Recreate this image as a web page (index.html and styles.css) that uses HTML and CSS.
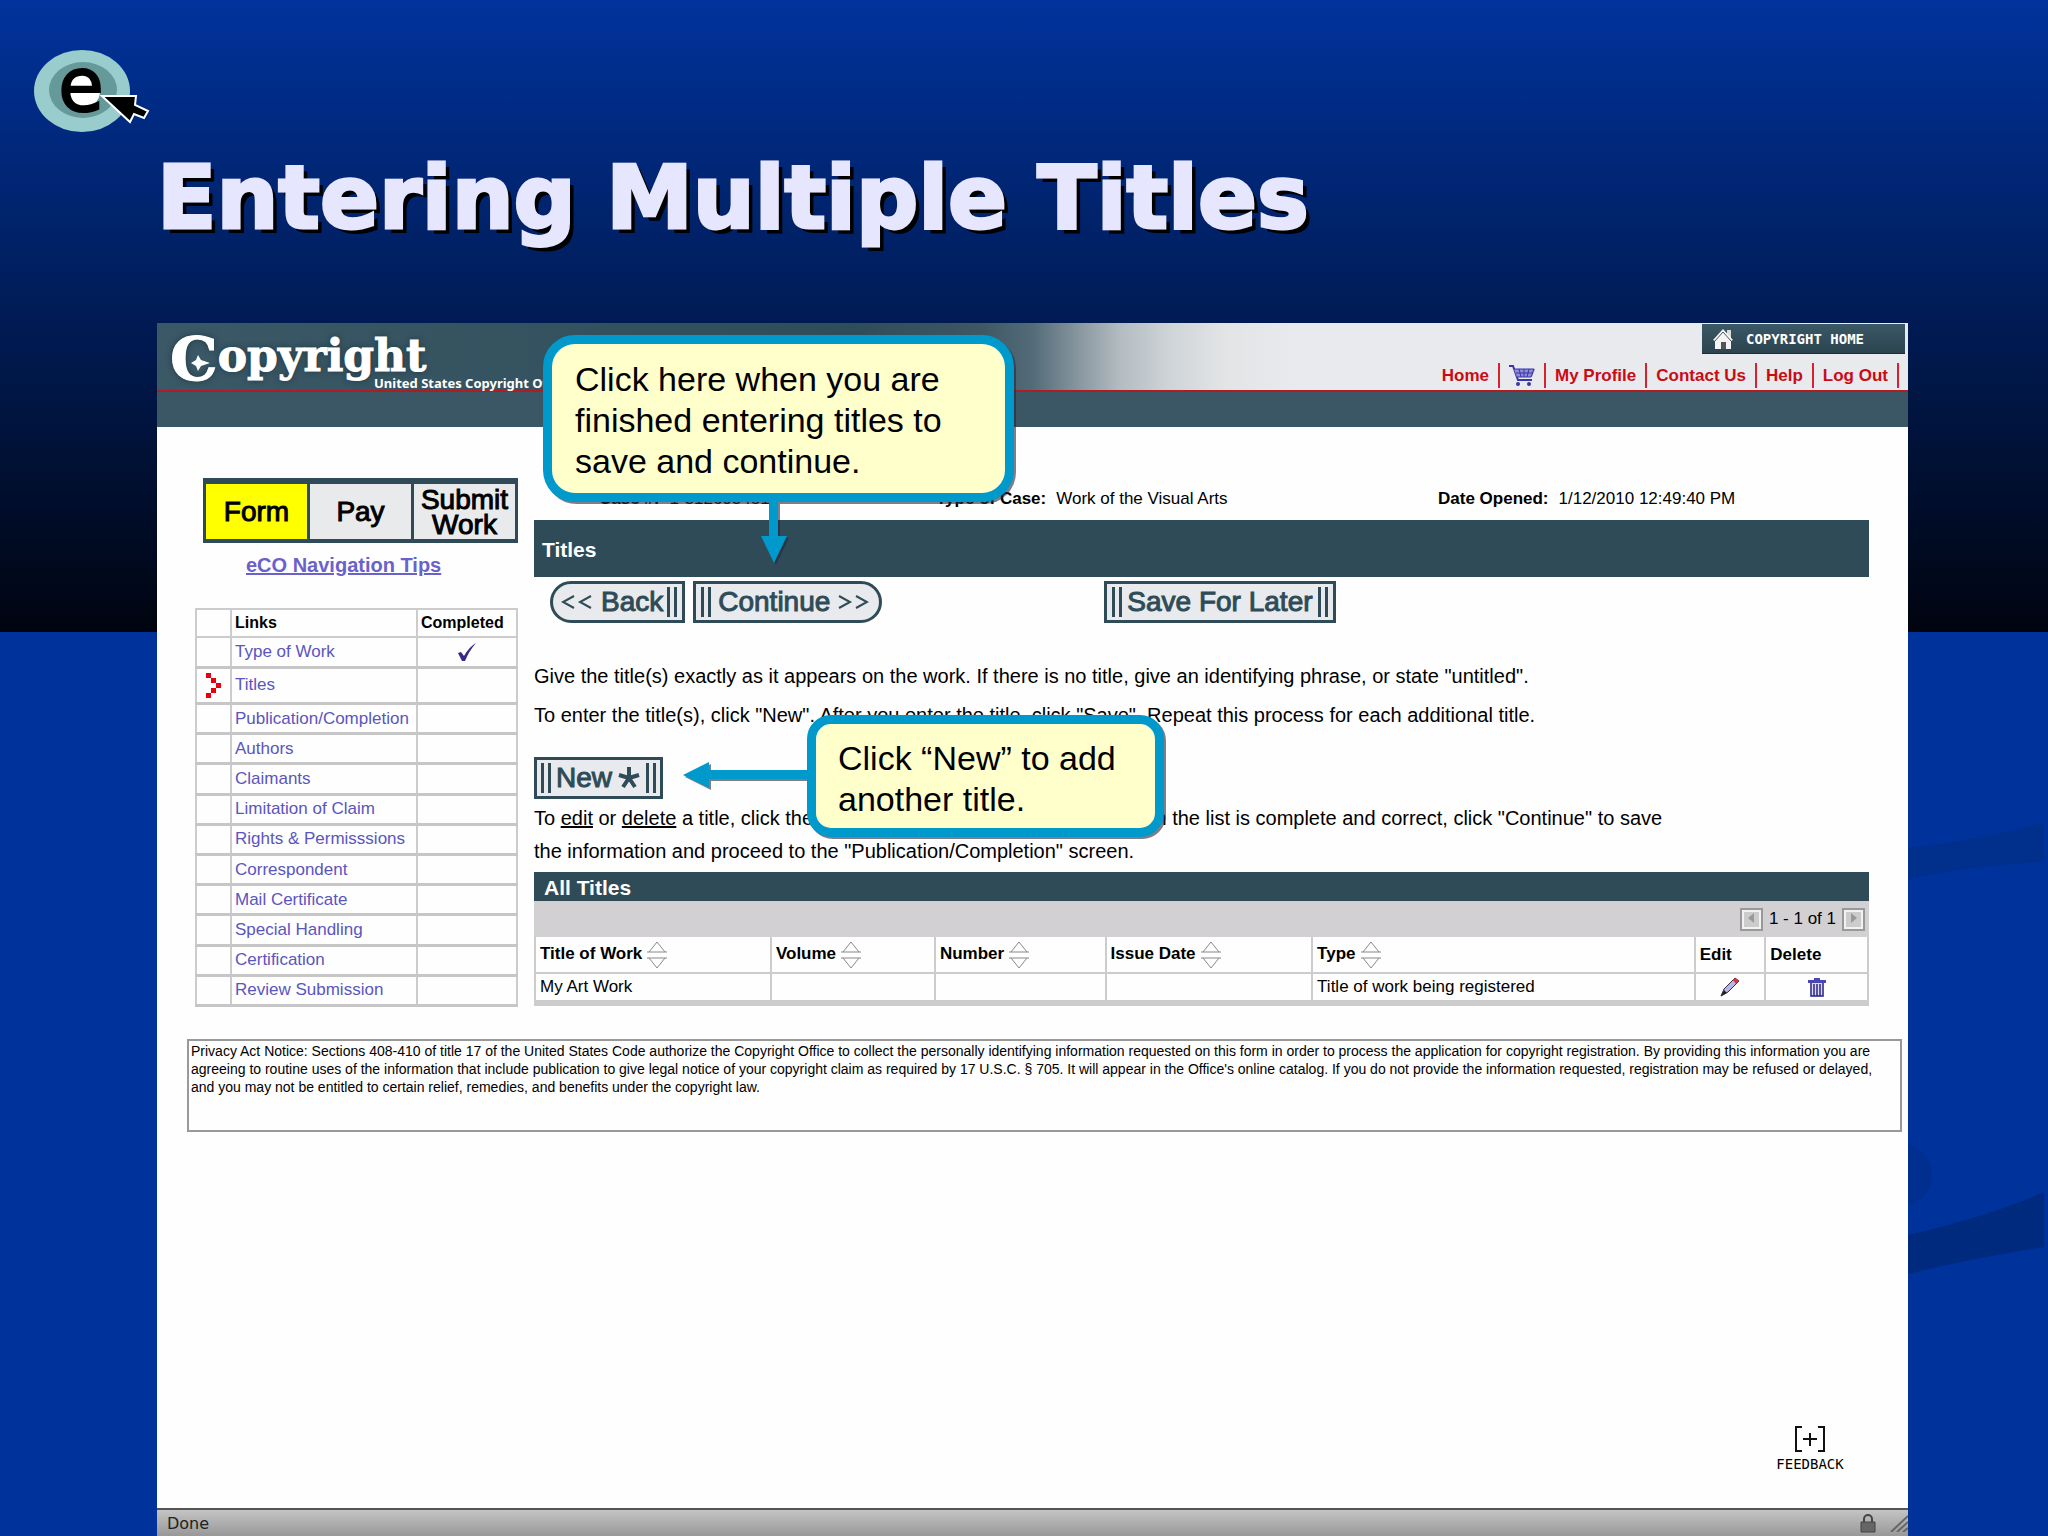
FILE: index.html
```html
<!DOCTYPE html>
<html lang="en">
<head>
  <meta charset="UTF-8">
  <title>Entering Multiple Titles</title>
  <link rel="stylesheet" href="styles.css">
</head>
<body>
<div class="slide">
  <svg class="swoosh" viewBox="0 0 140 480" aria-hidden="true">
    <path d="M0 48 Q70 40 136 23 V62 Q60 66 0 79Z" fill="#002f8c"/>
    <path d="M0 344 Q24 354 24 375 Q24 396 0 406Z" fill="#002f90"/>
    <path d="M0 435 Q80 417 136 392 V447 Q60 459 0 474Z" fill="#002a7e"/>
  </svg>

  <div class="slide-head">
    <svg class="e-logo" viewBox="0 0 116 84" role="img" aria-label="eCO">
      <ellipse cx="48" cy="41" rx="48" ry="41" fill="#99cccc"/>
      <ellipse cx="49" cy="40" rx="34" ry="28" fill="#669999"/>
      <ellipse cx="47" cy="41" rx="19" ry="18" fill="#fff"/>
      <text class="e-letter" x="47" y="61" text-anchor="middle">e</text>
      <path d="M68 46 L102 46 L101 55 L114 61 L110 68 L100 64 L96 72 Z" fill="#000" stroke="#fff" stroke-width="2"/>
    </svg>
    <h1>Entering Multiple Titles</h1>
  </div>

  <div class="browser">
    <!-- site banner -->
    <header class="banner">
      <div class="brand">
        <div class="brand-name"><span class="big">C</span>opyright
          <svg class="star" viewBox="0 0 20 20"><path d="M8 2 L11 7 L20 10 L11 13 L8 18 L6 13 L1 10 L6 7Z" fill="#fff"/></svg>
        </div>
        <div class="brand-sub">United States Copyright Office</div>
      </div>
      <div class="banner-right">
        <a class="home-btn" href="#">
          <svg width="22" height="22" viewBox="0 0 22 22"><path d="M15 2h4v8h-4z" fill="#ddd"/><path d="M1 12 L11 1 L21 12 L19 13 V21 H3 V13Z" fill="#f4f4f4"/><path d="M3 13 L11 4 L19 13" fill="none" stroke="#555" stroke-width="1"/><path d="M9 14h5v7H9z" fill="#555"/></svg>
          COPYRIGHT HOME
        </a>
        <nav class="top-nav">
          <a href="#">Home</a>
          <a href="#" aria-label="Cart"><svg width="26" height="22" viewBox="0 0 26 22"><path d="M0 1h4l5 14h14" fill="none" stroke="#3a35a8" stroke-width="2"/><path d="M5 4h21l-3 8H8z" fill="#8f8cd8"/><path d="M5 4h20l-3 8H8M7 8h17M10 4l2 8M15 4v8M20 4l-2 8" fill="none" stroke="#3a35a8"/><circle cx="9" cy="19" r="2" fill="#3a35a8"/><circle cx="20" cy="19" r="2" fill="#3a35a8"/></svg></a>
          <a href="#">My Profile</a>
          <a href="#">Contact Us</a>
          <a href="#">Help</a>
          <a href="#">Log Out</a>
        </nav>
      </div>
    </header>
    <div class="band"></div>

    <div class="columns">
      <aside class="sidebar">
        <div class="tabs">
          <button class="tab active">Form</button>
          <button class="tab">Pay</button>
          <button class="tab">Submit Work</button>
        </div>
        <a class="tips" href="#">eCO Navigation Tips</a>
        <table class="links">
          <colgroup><col class="c-mark"><col><col class="c-done"></colgroup>
          <tr><th></th><th>Links</th><th>Completed</th></tr>
          <tr><td></td><td><a href="#">Type of Work</a></td><td class="mid"><svg width="20" height="18" viewBox="0 0 20 18"><path d="M1 10 L4 9 L7 13 Q12 4 19 0 Q12 8 8 18 H5Z" fill="#332a86"/></svg></td></tr>
          <tr class="current"><td class="mid"><svg width="15" height="25" viewBox="0 0 15 25"><path d="M0 0h5v5H0zM5 5h5v5H5zM10 10h5v5h-5zM5 15h5v5H5zM0 20h5v5H0z" fill="#e8000c"/></svg></td><td><a href="#">Titles</a></td><td></td></tr>
          <tr><td></td><td><a href="#">Publication/Completion</a></td><td></td></tr>
          <tr><td></td><td><a href="#">Authors</a></td><td></td></tr>
          <tr><td></td><td><a href="#">Claimants</a></td><td></td></tr>
          <tr><td></td><td><a href="#">Limitation of Claim</a></td><td></td></tr>
          <tr><td></td><td><a href="#">Rights &amp; Permisssions</a></td><td></td></tr>
          <tr><td></td><td><a href="#">Correspondent</a></td><td></td></tr>
          <tr><td></td><td><a href="#">Mail Certificate</a></td><td></td></tr>
          <tr><td></td><td><a href="#">Special Handling</a></td><td></td></tr>
          <tr><td></td><td><a href="#">Certification</a></td><td></td></tr>
          <tr><td></td><td><a href="#">Review Submission</a></td><td></td></tr>
        </table>
      </aside>

      <main class="content">
        <div class="case-info">
          <div><b>Case #:</b><span>1-312693451</span></div>
          <div><b>Type of Case:</b><span>Work of the Visual Arts</span></div>
          <div><b>Date Opened:</b><span>1/12/2010 12:49:40 PM</span></div>
        </div>
        <h2 class="bar">Titles</h2>
        <div class="actions">
          <button class="btn back"><svg width="32" height="16" viewBox="0 0 32 16"><path d="M13 2L2 8l11 6M30 2L19 8l11 6" fill="none" stroke="#2f4b57" stroke-width="2"/></svg>Back<i class="grip"></i></button>
          <button class="btn continue"><i class="grip"></i>Continue<svg width="32" height="16" viewBox="0 0 32 16"><path d="M2 2l11 6L2 14M19 2l11 6-11 6" fill="none" stroke="#2f4b57" stroke-width="2"/></svg></button>
          <button class="btn later"><i class="grip"></i>Save For Later<i class="grip"></i></button>
        </div>
        <p class="give">Give the title(s) exactly as it appears on the work. If there is no title, give an identifying phrase, or state "untitled".</p>
        <p>To enter the title(s), click "New". After you enter the title, click "Save". Repeat this process for each additional title.</p>
        <button class="btn new"><i class="grip"></i>New<svg width="24" height="24" viewBox="0 0 24 24"><path d="M12 1v11M12 12L2 9M12 12l10-3M12 12L6 21M12 12l6 9" stroke="#2f4b57" stroke-width="4" fill="none"/></svg><i class="grip"></i></button>
        <p class="edit-note">To <u>edit</u> or <u>delete</u> a title, click the appropriate icon in the list below. When the list is complete and correct, click "Continue" to save<br>the information and proceed to the "Publication/Completion" screen.</p>

        <h3 class="list-bar">All Titles</h3>
        <div class="pager">
          <button aria-label="Previous"><svg width="8" height="12" viewBox="0 0 8 12"><path d="M7 1v10L1 6z" fill="#999"/></svg></button>
          <span>1 - 1 of 1</span>
          <button aria-label="Next"><svg width="8" height="12" viewBox="0 0 8 12"><path d="M1 1v10l6-5z" fill="#999"/></svg></button>
        </div>
        <table class="titles">
          <colgroup><col class="t1"><col class="t2"><col class="t3"><col class="t4"><col class="t5"><col class="t6"><col class="t7"></colgroup>
          <tr>
            <th>Title of Work<svg class="sort" viewBox="0 0 20 28"><path d="M2 11L10 1l8 10M0 11h20M0 17h20M2 17l8 10 8-10"/></svg></th>
            <th>Volume<svg class="sort" viewBox="0 0 20 28"><path d="M2 11L10 1l8 10M0 11h20M0 17h20M2 17l8 10 8-10"/></svg></th>
            <th>Number<svg class="sort" viewBox="0 0 20 28"><path d="M2 11L10 1l8 10M0 11h20M0 17h20M2 17l8 10 8-10"/></svg></th>
            <th>Issue Date<svg class="sort" viewBox="0 0 20 28"><path d="M2 11L10 1l8 10M0 11h20M0 17h20M2 17l8 10 8-10"/></svg></th>
            <th>Type<svg class="sort" viewBox="0 0 20 28"><path d="M2 11L10 1l8 10M0 11h20M0 17h20M2 17l8 10 8-10"/></svg></th>
            <th>Edit</th>
            <th>Delete</th>
          </tr>
          <tr>
            <td>My Art Work</td><td></td><td></td><td></td><td>Title of work being registered</td>
            <td class="mid"><svg width="20" height="20" viewBox="0 0 20 20"><path d="M1 19L4 12 15 1l4 3L8 15z" fill="#b9b4ea" stroke="#333" stroke-width="1"/><path d="M15 1l4 3-3 3-3-4z" fill="#e0303c"/><path d="M1 19l3-6 3 3z" fill="#222"/></svg></td>
            <td class="mid"><svg width="18" height="19" viewBox="0 0 18 19"><path d="M6 0h6v2H6zM0 2h18v3H0z" fill="#4a46b4"/><path d="M2 5h14v14H2z" fill="#dcdaf4"/><path d="M3 5v13h12V5M6 6v12M9 6v12M12 6v12" fill="none" stroke="#2b2788" stroke-width="1.5"/></svg></td>
          </tr>
        </table>
      </main>
    </div>

    <div class="privacy">Privacy Act Notice: Sections 408-410 of title 17 of the United States Code authorize the Copyright Office to collect the personally identifying information requested on this form in order to process the application for copyright registration. By providing this information you are agreeing to routine uses of the information that include publication to give legal notice of your copyright claim as required by 17 U.S.C. § 705. It will appear in the Office's online catalog. If you do not provide the information requested, registration may be refused or delayed, and you may not be entitled to certain relief, remedies, and benefits under the copyright law.</div>

    <a class="feedback" href="#">
      <svg width="32" height="26" viewBox="0 0 32 26"><path d="M8 1H2v24h6M24 1h6v24h-6M16 7v13M9 13h14" fill="none" stroke="#111" stroke-width="2"/></svg>
      FEEDBACK
    </a>

    <footer class="status">
      <span>Done</span>
      <svg class="lock" width="16" height="20" viewBox="0 0 16 20"><path d="M4 9V6a4 4 0 0 1 8 0v3" fill="none" stroke="#444" stroke-width="2"/><path d="M1 9h14v10H1z" fill="#666" stroke="#444"/></svg>
      <svg width="18" height="18" viewBox="0 0 18 18"><path d="M1 18L18 2M7 18L18 8M13 18l5-4" stroke="#666" stroke-width="2"/></svg>
    </footer>

    <!-- callouts over the page -->
    <div class="callout save">Click here when you are finished entering titles to save and continue.
      <svg class="arrow-down" viewBox="0 0 26 64"><path d="M8 0h9v36h9L13 63 0 36h8z" fill="#0099cc"/></svg>
    </div>
    <div class="callout add">Click “New” to add another title.
      <svg class="arrow-left" viewBox="0 0 128 26"><path d="M128 8v9H26v9L0 13 26 0v8z" fill="#0099cc"/></svg>
    </div>
  </div>
</div>
</body>
</html>
```
FILE: styles.css
```css
*{
    margin: 0;
    padding: 0;
    box-sizing: border-box;
}
body{
    font-family: "Liberation Sans", Arial, sans-serif;
    font-size: 17px;
    color: #000;
}
button{
    font-family: inherit;
}
.slide{
    min-height: 100vh;
    display: flex;
    flex-direction: column;
    position: relative;
    padding: 0 140px 0 157px;
    background: linear-gradient(#00339c, #00040f 632px, #00329c 632px);
}
.swoosh{
    position: absolute;
    right: 0;
    top: 800px;
    width: 140px;
    height: 480px;
}
.slide-head{
    height: 323px;
    padding-top: 138px;
}
.e-logo{
    position: absolute;
    left: 34px;
    top: 50px;
    width: 116px;
    height: 84px;
    overflow: visible;
}
.e-letter{
    font-family: "DejaVu Sans", sans-serif;
    font-size: 74px;
    stroke: #000;
    stroke-width: 2px;
}
h1{
    font-family: "Arial Black", "DejaVu Sans", sans-serif;
    font-weight: bold;
    font-size: 87px;
    line-height: 120px;
    color: #e6e6ff;
    -webkit-text-stroke: 3px #e6e6ff;
    text-shadow: 5px 5px 0 #000;
    white-space: nowrap;
}
.browser{
    flex: 1;
    display: flex;
    flex-direction: column;
    position: relative;
    background: #fefefe;
}

/* banner */
.banner{
    display: flex;
    justify-content: space-between;
    height: 69px;
    border-bottom: 2px solid #b01c22;
    background: linear-gradient(to right, #3b5866 0%, #2f4d59 40%, #3d5763 47%, #536b78 50%, #8f9ca4 53%, #b3bcc1 55%, #d0d5d8 58%, #e3e4e6 61%, #e8eaed 65%);
}
.brand{
    width: 480px;
    padding: 11px 0 0 13px;
    color: #fff;
}
.brand-name{
    position: relative;
    height: 43px;
    font-family: "DejaVu Serif", serif;
    font-weight: bold;
    font-size: 44px;
    line-height: 44px;
    -webkit-text-stroke: 1px #fff;
    text-shadow: 0 0 6px #1c333d;
}
.brand-name .big{
    font-size: 60px;
    line-height: 20px;
    vertical-align: -9px;
}
.star{
    position: absolute;
    left: 20px;
    top: 19px;
    width: 20px;
    height: 20px;
}
.brand-sub{
    padding-left: 204px;
    font-family: "Noto Sans", sans-serif;
    font-weight: bold;
    font-size: 13px;
    line-height: 12px;
}
.banner-right{
    display: flex;
    flex-direction: column;
    align-items: flex-end;
    padding: 1px 3px 0 0;
}
.home-btn{
    display: flex;
    align-items: center;
    gap: 12px;
    width: 203px;
    height: 30px;
    padding-left: 10px;
    background: linear-gradient(#3b5866, #2b444f);
    border-bottom: 1px solid #1c2f37;
    color: #fff;
    font-family: "DejaVu Sans Mono", monospace;
    font-weight: bold;
    font-size: 14px;
    text-decoration: none;
}
.top-nav{
    display: flex;
    align-items: center;
    margin: 9px 6px 0 0;
}
.top-nav a{
    display: flex;
    align-items: center;
    height: 25px;
    padding: 0 9px;
    border-right: 2px solid #d8232f;
    color: #cc0a14;
    font-weight: bold;
    text-decoration: none;
}
.band{
    height: 35px;
    background: #3b5766;
}

/* page columns */
.columns{
    display: flex;
    gap: 16px;
    padding: 0 39px 0 38px;
}
.sidebar{
    width: 323px;
    padding-top: 51px;
}
.tabs{
    display: flex;
    gap: 3px;
    height: 65px;
    margin-left: 8px;
    padding: 6px 3px 4px;
    background: #2f4b57;
}
.tab{
    flex: 1 1 0;
    width: 0;
    border: none;
    background: #e8eaec;
    font-size: 28px;
    line-height: 25px;
    -webkit-text-stroke: 1px #000;
}
.tab.active{
    background: #ff0;
}
.tips{
    display: block;
    width: fit-content;
    margin: 10px 0 31px 51px;
    font-size: 20px;
    line-height: 24px;
    font-weight: bold;
    color: #6a62cc;
}
table{
    width: 100%;
    border-collapse: collapse;
    table-layout: fixed;
}
th, td{
    border: 2px solid #ccc;
    text-align: left;
    white-space: nowrap;
}
.links{
    height: 399px;
}
.links td, .links th{
    padding-left: 3px;
    line-height: 20px;
    height: 30px;
}
.links th{
    height: 28px;
    font-size: 16px;
}
.links td{
    border-bottom: 3px solid #c6c6c6;
}
.links .current td{
    height: 36px;
}
.links a{
    color: #5a55c0;
    text-decoration: none;
}
.c-mark{
    width: 35px;
}
.c-done{
    width: 100px;
}
.links td.mid, .titles td.mid{
    padding: 0;
    text-align: center;
}
td.mid svg{
    display: block;
    margin: 0 auto;
}

.content{
    flex: 1;
    padding-top: 61px;
}
.case-info{
    display: grid;
    grid-template-columns: 337px 502px 1fr;
    margin: 0 0 10px 65px;
    line-height: 22px;
}
.case-info span{
    margin-left: 10px;
}
.bar{
    height: 57px;
    padding-left: 8px;
    background: #2f4b57;
    color: #fff;
    font-size: 21px;
    line-height: 59px;
}
.actions{
    display: flex;
    gap: 8px;
    margin: 4px 0 41px 16px;
}
.btn{
    display: flex;
    align-items: center;
    height: 42px;
    padding: 0 5px;
    border: 3px solid #2f4b57;
    background: #e8eaed;
    color: #2f4b57;
    font-size: 28px;
    gap: 5px;
    -webkit-text-stroke: 1px #2f4b57;
}
.grip{
    width: 10px;
    height: 30px;
    border: solid #2f4b57;
    border-width: 0 3px;
}
.back{
    border-radius: 21px 0 0 21px;
    padding-left: 8px;
    gap: 8px;
}
.back .grip{
    margin-left: -4px;
}
.continue{
    border-radius: 0 21px 21px 0;
    padding-right: 10px;
    gap: 7px;
}
.later{
    margin-left: 214px;
}
.new{
    margin: 30px 0 3px;
    padding: 0 4px;
}
p{
    font-size: 20px;
    line-height: 24px;
    white-space: nowrap;
}
.give{
    margin-bottom: 15px;
}
.edit-note{
    line-height: 33px;
    margin-bottom: 4px;
}
.list-bar{
    height: 29px;
    padding-left: 10px;
    background: #2f4b57;
    color: #fff;
    font-size: 21px;
    line-height: 31px;
}
.pager{
    display: flex;
    justify-content: flex-end;
    align-items: center;
    gap: 6px;
    height: 36px;
    padding-right: 4px;
    background: #d2d0d3;
}
.pager button{
    width: 23px;
    height: 23px;
    border: 2px solid #999;
    box-shadow: inset 0 0 0 2px #f2f2f2;
    background: #ccc;
}
.titles{
    border-bottom: 6px solid #ccc;
}
.titles th, .titles td{
    padding-left: 4px;
    height: 36px;
}
.titles td{
    height: 30px;
}
.titles tr:first-child th{
    border-top: none;
}
.sort{
    width: 20px;
    height: 28px;
    margin-left: 5px;
    vertical-align: middle;
    fill: none;
    stroke: #888;
}
.t1{ width: 17.7%; }
.t2{ width: 12.3%; }
.t3{ width: 12.8%; }
.t4{ width: 15.5%; }
.t5{ width: 28.7%; }
.t6{ width: 5.3%; }
.t7{ width: 7.7%; }

.privacy{
    min-height: 93px;
    margin: 32px 6px 0 30px;
    padding: 1px 2px;
    border: 2px solid #999;
    font-size: 14px;
    line-height: 18px;
}
.feedback{
    display: flex;
    flex-direction: column;
    align-items: center;
    gap: 4px;
    width: 80px;
    margin: auto 58px 36px auto;
    color: #000;
    font-family: "DejaVu Sans Mono", monospace;
    font-size: 14px;
    line-height: 16px;
    text-decoration: none;
}
.status{
    display: flex;
    align-items: center;
    height: 28px;
    padding-left: 10px;
    border-top: 2px solid #555;
    background: linear-gradient(#c4c4c4, #989898);
    color: #222;
    font-family: "DejaVu Sans", sans-serif;
    font-size: 16px;
}
.lock{
    margin: 0 14px 0 auto;
}

/* callouts */
.callout{
    position: absolute;
    border: 9px solid #0099cc;
    background: #ffffcc;
    font-size: 34px;
    line-height: 41px;
    border-radius: 32px;
    filter: drop-shadow(2px 2px 0 rgba(40,40,60,0.6));
}
.save{
    left: 386px;
    top: 12px;
    width: 471px;
    height: 167px;
    padding: 15px 50px 0 23px;
}
.add{
    left: 650px;
    top: 392px;
    width: 357px;
    height: 122px;
    padding: 14px 20px 0 22px;
    border-radius: 24px;
}
.arrow-down{
    position: absolute;
    left: 209px;
    top: 156px;
    width: 26px;
    height: 64px;
}
.arrow-left{
    position: absolute;
    right: 344px;
    top: 38px;
    width: 128px;
    height: 26px;
}
```
